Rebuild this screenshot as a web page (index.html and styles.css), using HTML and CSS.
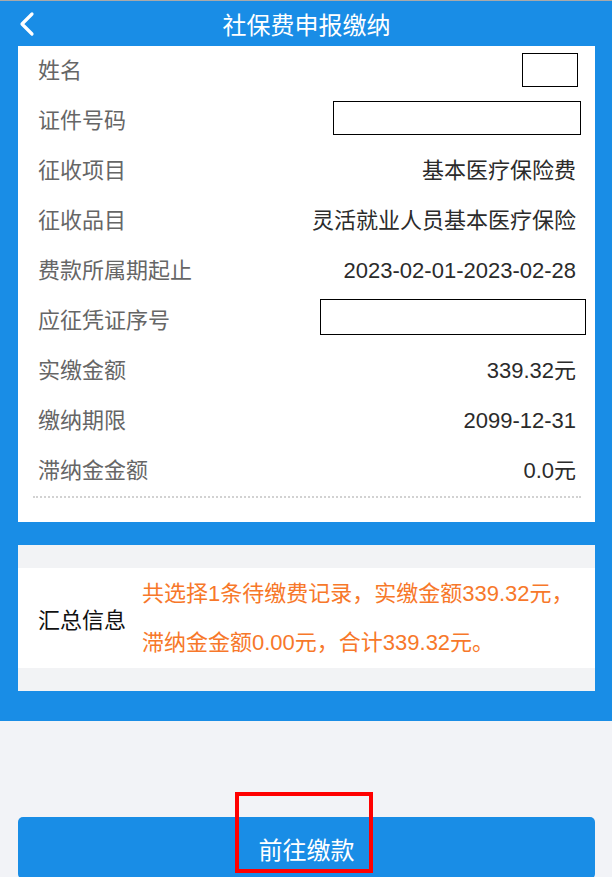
FILE: index.html
```html
<!DOCTYPE html>
<html lang="zh-CN">
<head>
    <meta charset="UTF-8">
    <meta name="viewport" content="width=device-width, initial-scale=1.0">
    <title>社保费申报缴纳</title>
    <link rel="stylesheet" href="styles.css">
</head>
<body>

<div class="blue-area">
    <div class="header">
        <svg class="back" width="18" height="26" viewBox="0 0 18 26">
            <polyline points="14,3 4,13 14,23" fill="none" stroke="#fff" stroke-width="3.2" stroke-linecap="round" stroke-linejoin="round"/>
        </svg>
        <h1>社保费申报缴纳</h1>
    </div>

    <div class="info-card">
        <div class="row">
            <span class="label">姓名</span>
            <span class="box box-name"></span>
        </div>
        <div class="row">
            <span class="label">证件号码</span>
            <span class="box box-id"></span>
        </div>
        <div class="row">
            <span class="label">征收项目</span>
            <span class="value">基本医疗保险费</span>
        </div>
        <div class="row">
            <span class="label">征收品目</span>
            <span class="value">灵活就业人员基本医疗保险</span>
        </div>
        <div class="row">
            <span class="label">费款所属期起止</span>
            <span class="value">2023-02-01-2023-02-28</span>
        </div>
        <div class="row">
            <span class="label">应征凭证序号</span>
            <span class="box box-no"></span>
        </div>
        <div class="row">
            <span class="label">实缴金额</span>
            <span class="value">339.32元</span>
        </div>
        <div class="row">
            <span class="label">缴纳期限</span>
            <span class="value">2099-12-31</span>
        </div>
        <div class="row">
            <span class="label">滞纳金金额</span>
            <span class="value">0.0元</span>
        </div>
        <div class="dots"></div>
    </div>

    <div class="summary-card">
        <div class="summary-row">
            <span class="summary-label">汇总信息</span>
            <p class="summary-text">共选择1条待缴费记录，实缴金额339.32元，<br>滞纳金金额0.00元，合计339.32元。</p>
        </div>
    </div>
</div>

<div class="footer">
    <button class="pay-btn">前往缴款</button>
    <div class="mark"></div>
</div>

</body>
</html>
```

FILE: styles.css
```css
body {
    margin: 0;
    background-color: #f2f3f7;
    font-family: "Liberation Sans", "Noto Sans CJK SC", sans-serif;
}
.blue-area {
    background-color: #198de6;
    border-top: 1px solid #a9a9a9;
    padding: 0 17px 30px 18px;
}
.header {
    height: 45px;
    display: flex;
    align-items: center;
    justify-content: center;
    position: relative;
}
.header h1 {
    margin: 0;
    color: #fff;
    font-size: 24px;
    font-weight: normal;
}
.header .back {
    position: absolute;
    left: 0;
    top: 10px;
}
.info-card {
    background-color: #fff;
    padding: 0 19px 24px 20px;
}
.row {
    height: 50px;
    display: flex;
    align-items: center;
    justify-content: space-between;
    line-height: 1;
    padding-bottom: 1px;
    box-sizing: border-box;
}
.label {
    font-size: 22px;
    color: #666;
}
.value {
    font-size: 22px;
    color: #2b2b2b;
}
.box {
    border: 1px solid #000;
    box-sizing: border-box;
}
.box-name {
    width: 56px;
    height: 34px;
    margin-right: -2px;
    margin-bottom: 1px;
}
.box-id {
    width: 248px;
    height: 34px;
    margin-right: -5px;
    margin-bottom: 6px;
}
.box-no {
    width: 266px;
    height: 36px;
    margin-right: -10px;
    margin-bottom: 8px;
}
.dots {
    margin: 0 -5px;
    border-top: 2px dotted #d2d2d2;
}
.summary-card {
    margin-top: 23px;
    background-color: #f2f3f5;
    padding: 23px 0;
}
.summary-row {
    background-color: #fff;
    height: 100px;
    display: flex;
    align-items: center;
    padding-left: 20px;
}
.summary-label {
    width: 104px;
    font-size: 22px;
    color: #111;
}
.summary-text {
    margin: 0;
    font-size: 22px;
    line-height: 49px;
    color: #f7782a;
}
.footer {
    padding: 96px 17px 0 18px;
    position: relative;
}
.pay-btn {
    display: block;
    width: 100%;
    height: 62px;
    border: none;
    border-radius: 5px;
    background-color: #198de6;
    color: #fff;
    font-family: "Liberation Sans", "Noto Sans CJK SC", sans-serif;
    font-size: 24px;
    padding: 0;
}
.mark {
    position: absolute;
    left: 235px;
    top: 71px;
    width: 138px;
    height: 81px;
    border: 4px solid #f00;
    box-sizing: border-box;
}
```
